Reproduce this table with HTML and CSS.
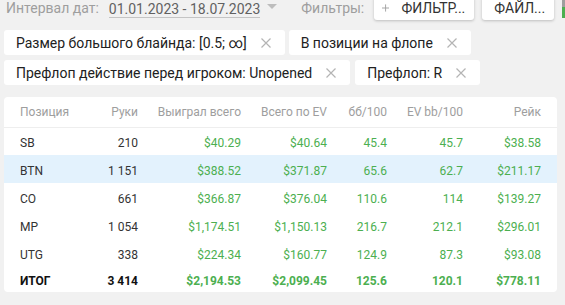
FILE: index.html
```html
<!DOCTYPE html>
<html lang="ru">
<head>
<meta charset="utf-8">
<link rel="stylesheet" href="styles.css">
</head>
<body>
<div class="topbar">
  <span class="label">Интервал дат:</span>
  <span class="date">01.01.2023 - 18.07.2023</span>
  <span class="caret"></span>
  <span class="label filters-label">Фильтры:</span>
  <button class="btn btn-add"><svg class="plus" width="10" height="10" viewBox="0 0 10 10"><path d="M5 0V10M0 5H10" stroke="#a0a0a0" stroke-width="1.3"/></svg><span>ФИЛЬТР...</span></button>
  <button class="btn btn-file">ФАЙЛ...</button>
  <span class="edge"><span class="edge-top"></span><span class="edge-bottom"></span></span>
</div>
<div class="chips">
  <div class="chip-row">
    <span class="chip">Размер большого блайнда: [0.5; ∞]<svg class="x" width="10" height="10" viewBox="0 0 10 10"><path d="M0.5 0.5L9.5 9.5M9.5 0.5L0.5 9.5" stroke="#b4b4b4" stroke-width="1.2"/></svg></span>
    <span class="chip">В позиции на флопе<svg class="x" width="10" height="10" viewBox="0 0 10 10"><path d="M0.5 0.5L9.5 9.5M9.5 0.5L0.5 9.5" stroke="#b4b4b4" stroke-width="1.2"/></svg></span>
  </div>
  <div class="chip-row">
    <span class="chip">Префлоп действие перед игроком: Unopened<svg class="x" width="10" height="10" viewBox="0 0 10 10"><path d="M0.5 0.5L9.5 9.5M9.5 0.5L0.5 9.5" stroke="#b4b4b4" stroke-width="1.2"/></svg></span>
    <span class="chip">Префлоп: R<svg class="x" width="10" height="10" viewBox="0 0 10 10"><path d="M0.5 0.5L9.5 9.5M9.5 0.5L0.5 9.5" stroke="#b4b4b4" stroke-width="1.2"/></svg></span>
  </div>
</div>
<div class="card">
  <table class="stats">
    <colgroup>
      <col class="c1"><col class="c2"><col class="c3"><col class="c4"><col class="c5"><col class="c6"><col class="c7">
    </colgroup>
    <thead>
      <tr><th class="left">Позиция</th><th>Руки</th><th>Выиграл всего</th><th>Всего по EV</th><th>бб/100</th><th>EV bb/100</th><th>Рейк</th></tr>
    </thead>
    <tbody>
      <tr><td class="left">SB</td><td>210</td><td class="g">$40.29</td><td class="g">$40.64</td><td class="g">45.4</td><td class="g">45.7</td><td class="g">$38.58</td></tr>
      <tr class="hl"><td class="left">BTN</td><td>1 151</td><td class="g">$388.52</td><td class="g">$371.87</td><td class="g">65.6</td><td class="g">62.7</td><td class="g">$211.17</td></tr>
      <tr><td class="left">CO</td><td>661</td><td class="g">$366.87</td><td class="g">$376.04</td><td class="g">110.6</td><td class="g">114</td><td class="g">$139.27</td></tr>
      <tr><td class="left">MP</td><td>1 054</td><td class="g">$1,174.51</td><td class="g">$1,150.13</td><td class="g">216.7</td><td class="g">212.1</td><td class="g">$296.01</td></tr>
      <tr><td class="left">UTG</td><td>338</td><td class="g">$224.34</td><td class="g">$160.77</td><td class="g">124.9</td><td class="g">87.3</td><td class="g">$93.08</td></tr>
      <tr class="total"><td class="left">ИТОГ</td><td>3 414</td><td class="g">$2,194.53</td><td class="g">$2,099.45</td><td class="g">125.6</td><td class="g">120.1</td><td class="g">$778.11</td></tr>
    </tbody>
  </table>
</div>
</body>
</html>
```
FILE: styles.css
```css
* { box-sizing: border-box; }
html, body { margin: 0; padding: 0; }
body {
  background: #f1f1f1;
  font-family: Roboto, "Noto Sans", "Liberation Sans", sans-serif;
  color: #212121;
  width: 565px;
  height: 305px;
  overflow: hidden;
}
.topbar {
  display: flex;
  align-items: center;
  height: 24px;
  margin-top: -4px;
  padding-left: 6px;
  font-size: 14px;
  white-space: nowrap;
}
.label { color: #9e9e9e; }
.date {
  color: #616161;
  margin-left: 10px;
  line-height: 16px;
  border-bottom: 1px solid #c4c4c4;
  margin-top: 3px;
}
.caret {
  width: 0; height: 0;
  border-left: 5px solid transparent;
  border-right: 5px solid transparent;
  border-top: 5px solid #bdbdbd;
  margin-left: 7px;
  margin-top: -3px;
}
.filters-label { margin-left: 24px; }
.btn {
  font-family: inherit;
  font-size: 14px;
  color: #333;
  background: #fff;
  border: none;
  border-radius: 3px;
  box-shadow: 0 1px 3px rgba(0,0,0,0.22);
  height: 24px;
  display: flex;
  align-items: center;
  padding: 0 12px;
  margin: 0;
}
.btn-add { margin-left: 10px; padding: 0 9px 0 8px; width: 100px; }
.btn-add .plus { margin-right: 12px; }
.btn-file { margin-left: 8px; width: 72px; }
.edge {
  display: flex;
  flex-direction: column;
  margin-left: 8px;
  align-self: flex-start;
}
.edge-top { width: 3px; height: 11px; background: #9e9e9e; }
.edge-bottom { width: 6px; height: 11px; border-left: 3px solid #4caf50; border-bottom: 3px solid #4caf50; }
.chips {
  display: flex;
  flex-direction: column;
  gap: 5px;
  margin-top: 10px;
  padding-left: 4px;
}
.chip-row { display: flex; gap: 4px; }
.chip-row + .chip-row .chip + .chip { margin-left: 1px; }
.chip {
  display: flex;
  align-items: center;
  height: 25px;
  padding: 0 14px 0 12px;
  background: #fff;
  border-radius: 3px;
  font-size: 14px;
  color: #212121;
  white-space: nowrap;
}
.chip .x { margin-left: 14px; }
.card {
  margin: 12px 8px 0 4px;
  background: #fff;
  border-radius: 4px;
  padding-bottom: 0;
}
.stats {
  width: 100%;
  border-collapse: collapse;
  table-layout: fixed;
  font-size: 12px;
}
.c1 { width: 86px; }
.c2 { width: 48px; }
.c3 { width: 103px; }
.c4 { width: 86px; }
.c5 { width: 60px; }
.c6 { width: 76px; }
.c7 { width: 94px; }
.stats th, .stats td {
  text-align: right;
  padding: 0;
  white-space: nowrap;
}
.stats th:first-child, .stats td:first-child { padding-left: 16px; text-align: left; }
.stats th:last-child, .stats td:last-child { padding-right: 16px; }
.stats thead tr { height: 30px; }
.stats th {
  font-weight: 400;
  color: #9e9e9e;
  padding-top: 1px;
  border-bottom: 1px solid #eeeeee;
}
.stats tbody tr { height: 28px; }
.stats td { color: #333; padding-top: 3px; }
.stats td.g { color: #4caf50; }
.stats tr.hl td { background: #e3f2fd; }
.stats tbody tr.total { height: 25px; }
.stats tr.total td {
  height: 25px;
  vertical-align: top;
  padding-top: 7px;
  font-weight: 700;
  color: #111;
}
.stats tr.total td.g { color: #4caf50; }
```
